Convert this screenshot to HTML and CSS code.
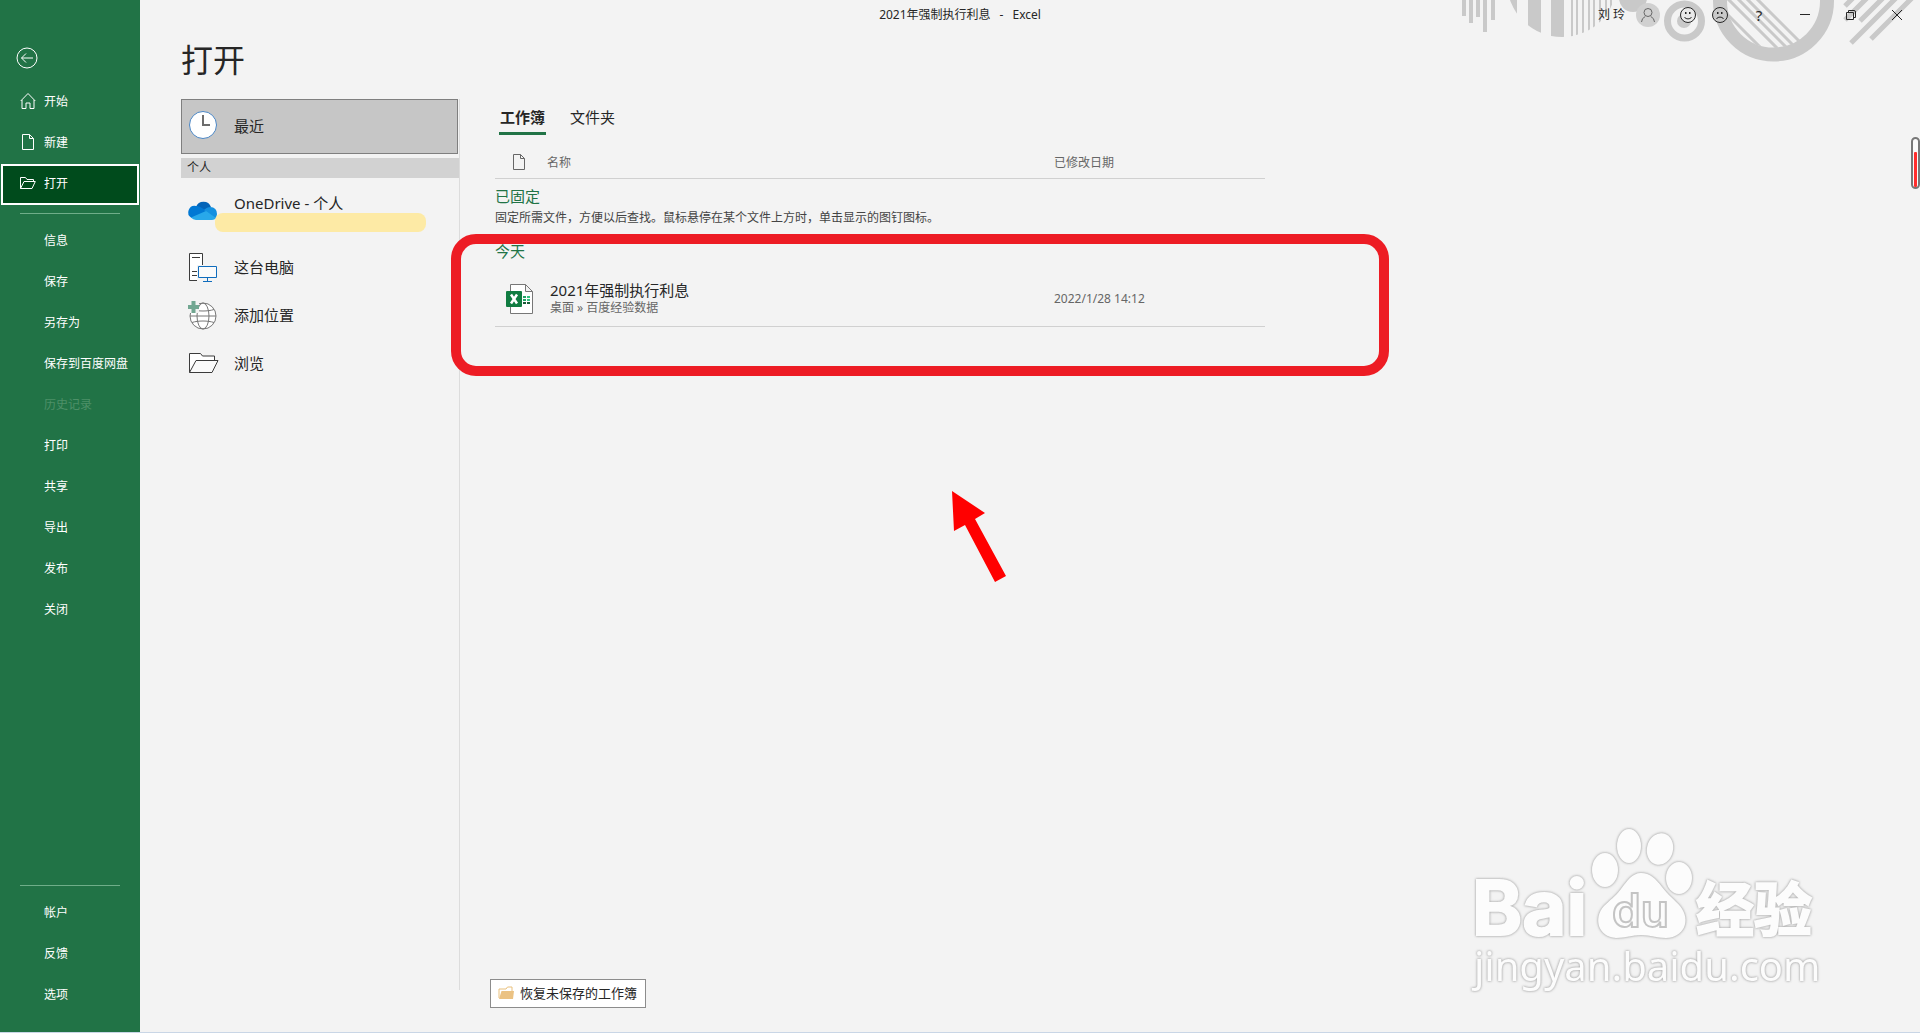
FILE: index.html
```html
<!DOCTYPE html>
<html lang="zh-CN">
<head>
    <meta charset="UTF-8">
    <title>2021年强制执行利息 - Excel</title>
    <link rel="stylesheet" href="styles.css">
</head>
<body>
<div class="app">

    <header class="titlebar">
        <svg class="titlebar-art" width="480" height="70" viewBox="0 0 480 70" aria-hidden="true">
            <defs>
                <clipPath id="discClip"><circle cx="122" cy="-18" r="55"/></clipPath>
                <clipPath id="ringClip"><circle cx="333.500" cy="1" r="47"/></clipPath>
            </defs>
            <g fill="#c9c9c9">
                <path d="M22 0h4v16h-4zM29 0h4v23h-4zM36 0h4v17h-4zM43 0h4v32h-4zM51 0h4v20h-4z"/>
                <path clip-path="url(#discClip)" d="M64 0h13v40H64zM88 0h13v40H88zM111 0h13v40h-13zM131 0h2v40h-2zM136 0h2v40h-2zM142 0h2v40h-2zM148 0h2v40h-2zM153 0h2v40h-2zM159 0h2v40h-2zM165 0h2v40h-2zM170 0h2v40h-2z"/>
                <circle cx="193" cy="-2" r="14"/>
                <circle cx="244" cy="21" r="7"/>
            </g>
            <g fill="none" stroke="#c9c9c9">
                <circle cx="244.500" cy="21" r="17" stroke-width="7"/>
                <circle cx="333.500" cy="1" r="53.500" stroke-width="14"/>
                <g clip-path="url(#ringClip)" stroke-width="3">
                    <path d="M269-4l62 62M285-4l57 57M295-4l54 54M304-4l51 51M314-4l46 46"/>
                </g>
                <path stroke-width="5" d="M405 6l9-9M405 20l28-28M420 21l28-28M411 43l48-48M431 39l45-45"/>
            </g>
        </svg>
        <div class="doc-title"><span>2021年强制执行利息</span><span>-</span><span>Excel</span></div>
        <div class="titlebar-actions">
            <span class="user-name">刘 玲</span>
            <button class="avatar" aria-label="帐户">
                <svg width="16" height="16" viewBox="0 0 16 16"><circle cx="8" cy="5.500" r="4"/><path d="M1.500 15a6.500 6.500 0 0 1 3.700-5.500M14.500 15a6.500 6.500 0 0 0-3.700-5.500"/></svg>
            </button>
            <button class="face" aria-label="发送笑脸">
                <svg width="18" height="18" viewBox="0 0 18 18"><circle cx="9" cy="9" r="7.500"/><path d="M5.500 11c1 2.500 6 2.500 7 0"/><path class="eyes" d="M6 6h1.500v2H6zM10 6h1.500v2H10z"/></svg>
            </button>
            <button class="face" aria-label="发送哭脸">
                <svg width="18" height="18" viewBox="0 0 18 18"><circle cx="9" cy="9" r="7.500"/><path d="M5.500 13c1-2.500 6-2.500 7 0"/><path class="eyes" d="M6 6h1.500v2H6zM10 6h1.500v2H10z"/></svg>
            </button>
            <button class="win-btn help" aria-label="帮助">?</button>
            <button class="win-btn" aria-label="最小化">
                <svg width="12" height="12" viewBox="0 0 12 12"><path d="M1 5.500h10"/></svg>
            </button>
            <button class="win-btn" aria-label="还原">
                <svg width="12" height="12" viewBox="0 0 12 12"><path d="M1.500 3.500h7v7h-7zM3.500 3V1.500H9A1.500 1.500 0 0 1 10.500 3v5.500H9"/></svg>
            </button>
            <button class="win-btn" aria-label="关闭">
                <svg width="12" height="12" viewBox="0 0 12 12"><path d="M1 1l10 10M11 1L1 11"/></svg>
            </button>
        </div>
    </header>

    <nav class="sidebar">
        <button class="back" aria-label="返回">
            <svg width="22" height="22" viewBox="0 0 22 22"><circle cx="11" cy="11" r="10"/><path d="M17 11H5.500M10 6.500L5.500 11l4.500 4.500"/></svg>
        </button>
        <button class="nav-item">
            <svg width="16" height="18" viewBox="0 0 16 18"><path d="M.7 9L8 1.500 15.300 9M2 8v8.500h4V11h4v5.500h4V8"/></svg>
            开始
        </button>
        <button class="nav-item">
            <svg width="16" height="18" viewBox="0 0 16 18"><path d="M2.500 1.500h7l4 4v11h-11zM9.500 1.500v4h4"/></svg>
            新建
        </button>
        <button class="nav-item active">
            <svg width="16" height="18" viewBox="0 0 16 18"><path d="M.5 14.500v-11h5l1.500 2h6.500v2M.5 14.500L4 7.500h11.300l-3.300 7z"/></svg>
            打开
        </button>
        <hr>
        <button class="nav-item text-only">信息</button>
        <button class="nav-item text-only">保存</button>
        <button class="nav-item text-only">另存为</button>
        <button class="nav-item text-only">保存到百度网盘</button>
        <button class="nav-item text-only" disabled>历史记录</button>
        <button class="nav-item text-only">打印</button>
        <button class="nav-item text-only">共享</button>
        <button class="nav-item text-only">导出</button>
        <button class="nav-item text-only">发布</button>
        <button class="nav-item text-only">关闭</button>
        <div class="nav-bottom">
            <hr>
            <button class="nav-item text-only">帐户</button>
            <button class="nav-item text-only">反馈</button>
            <button class="nav-item text-only">选项</button>
        </div>
    </nav>

    <main class="main">
        <h1>打开</h1>
        <div class="columns">

            <section class="places">
                <button class="place recent">
                    <svg width="28" height="28" viewBox="0 0 28 28"><circle cx="14" cy="14" r="13.500" fill="#fff" stroke="#4a86c5"/><path d="M14 4v10h7" fill="none" stroke="#6d6d6d" stroke-width="2"/></svg>
                    最近
                </button>
                <h2 class="place-group">个人</h2>
                <button class="place onedrive">
                    <svg width="28" height="20" viewBox="0 0 28 20">
                        <path fill="#0364b8" d="M7 6a8 8 0 0 1 15 0l-5 5z"/>
                        <path fill="#0078d4" d="M7 5c2 0 3.500.5 5 1.500L20 11 2.500 17A6.500 6.500 0 0 1 7 5z"/>
                        <path fill="#1490df" d="M21.500 6A6.500 6.500 0 0 1 28 13c0 2-1 4-2 5L15 9c2-2 4-3 6.500-3z"/>
                        <path fill="#28a8ea" d="M2 16.500L17 10l10 7a5 5 0 0 1-4 2H7a7 7 0 0 1-5-2.500z"/>
                    </svg>
                    <span class="place-name">OneDrive - 个人</span>
                    <span class="mask"></span>
                </button>
                <button class="place">
                    <svg width="28" height="30" viewBox="0 0 28 30"><path d="M.5 1.500h13v27H.5z" fill="#fff" stroke="#3b3b3b"/><path d="M3 5.500h8M3 19.500h5M3 23.500h5" stroke="#3b3b3b"/><path d="M8 13h20v17H8z" fill="#f3f3f3"/><path d="M9.500 14.500h18v11h-18zM18.500 25.500v4M14 29.500h9" fill="#fafafa" stroke="#0f6cbd"/></svg>
                    这台电脑
                </button>
                <button class="place">
                    <svg width="28" height="30" viewBox="0 0 28 30"><circle cx="14" cy="16" r="13" fill="#fff"/><g fill="none" stroke="#777"><circle cx="14" cy="16" r="13"/><ellipse cx="14" cy="16" rx="6" ry="13"/><path d="M1 16h26M3 9.500c6 2 16 2 22 0M3 22.500c6-2 16-2 22 0"/></g><path d="M-1 0h11v13H-1z" fill="#f3f3f3"/><path d="M2.500 1h4v4H10v4H6.500v4h-4V9H-1V5h3.500z" fill="#72a792"/></svg>
                    添加位置
                </button>
                <button class="place">
                    <svg width="28" height="22" viewBox="0 0 28 22"><path d="M.5 20.500v-19h11l2 2.500h12v5" fill="#fff" stroke="#3b3b3b"/><path d="M.5 20.500L7 8.500h22l-6 12z" fill="#fafafa" stroke="#3b3b3b"/></svg>
                    浏览
                </button>
            </section>

            <section class="files">
                <div class="tabs">
                    <button class="tab selected">工作簿</button>
                    <button class="tab">文件夹</button>
                </div>
                <table class="file-table">
                    <thead>
                        <tr>
                            <th class="col-icon"><svg width="27" height="18" viewBox="0 0 27 18"><path d="M7.500 1.500h7l4 4v11h-11zM14.500 1.500v4h4" fill="none" stroke="#666"/></svg></th>
                            <th>名称</th>
                            <th class="col-date">已修改日期</th>
                        </tr>
                    </thead>
                    <tbody>
                        <tr>
                            <td class="pinned" colspan="3">
                                <h3>已固定</h3>
                                <p>固定所需文件，方便以后查找。鼠标悬停在某个文件上方时，单击显示的图钉图标。</p>
                            </td>
                        </tr>
                        <tr>
                            <td class="today" colspan="3"><h3>今天</h3></td>
                        </tr>
                        <tr class="file">
                            <td class="col-icon">
                                <svg width="27" height="32" viewBox="0 0 27 32">
                                    <path d="M4.500 1.500h15l7 7v22h-22zM19.500 1.500v7h7" fill="#fff" stroke="#777"/>
                                    <path d="M17 13h3v2h-3zM17 16h3v2h-3z" fill="#21a366"/><path d="M21 13h3v2h-3zM21 16h3v2h-3z" fill="#33c481"/><path d="M17 19h3v2h-3zM21 19h3v2h-3z" fill="#185c37"/>
                                    <rect y="8" width="16" height="16" rx="1" fill="#107c41"/>
                                    <path d="M5 11.500l6 9M11 11.500l-6 9" stroke="#fff" stroke-width="2.500"/>
                                </svg>
                            </td>
                            <td class="file-name">
                                <a href="#">2021年强制执行利息</a>
                                <small>桌面 » 百度经验数据</small>
                            </td>
                            <td class="col-date">2022/1/28 14:12</td>
                        </tr>
                    </tbody>
                </table>
                <button class="recover">
                    <svg width="16" height="14" viewBox="0 0 16 14"><path d="M1 12V3h7l1.500-2H14v4" fill="#fff" stroke="#e9c07d"/><path d="M1 13L3.500 5H16l-1 8z" fill="#ebc283"/></svg>
                    恢复未保存的工作簿
                </button>
            </section>
        </div>
    </main>

    <!-- marks laid over the window -->
    <div class="highlight"></div>
    <svg class="arrow" width="56" height="94" viewBox="0 0 56 94"><path fill="#f00" d="M0 1l33 22-10 6 31 57-11 6-30-57-11 6z"/></svg>
    <svg class="meter" width="9" height="52" viewBox="0 0 9 52"><rect x="1" y="1" width="7" height="50" rx="3.500" fill="#fafafa" stroke="#777" stroke-width="2"/><rect x="3" y="15" width="3" height="35" rx="1" fill="#ff2d2d"/></svg>

    <svg class="watermark" width="360" height="175" viewBox="0 0 360 175">
        <g class="wm-shape">
            <ellipse cx="135" cy="45" rx="13" ry="17"/>
            <ellipse cx="159" cy="21" rx="12" ry="17"/>
            <ellipse cx="190" cy="24" rx="13" ry="16" transform="rotate(14 190 24)"/>
            <ellipse cx="209" cy="53" rx="13" ry="16"/>
            <path d="M171 48c9 0 15 6 21 14s13 13 18 19c12 15 3 32-14 32-10 0-15-3-25-3-9 0-15 3-25 3-18-1-23-20-12-32 6-6 11-9 17-17s11-16 20-16z"/>
        </g>
        <text class="wm-bold" x="2" y="110" font-size="76">Bai</text>
        <text class="wm-du" x="142" y="102" font-size="46">du</text>
        <text class="wm-bold wm-cjk" x="226" y="106" font-size="58">经验</text>
        <text class="wm-url" x="4" y="156" font-size="40">jingyan.baidu.com</text>
    </svg>
</div>
</body>
</html>
```

FILE: styles.css
```css
* {
    box-sizing: border-box;
}

body {
    margin: 0;
    background-color: #f3f3f3;
    font-family: "Noto Sans", "Noto Sans CJK SC", sans-serif;
    font-size: 12px;
    color: #262626;
}

button {
    margin: 0;
    padding: 0;
    border: 0;
    background: none;
    color: inherit;
    font: inherit;
    text-align: left;
}

h1, h2, h3, p {
    margin: 0;
    font-weight: normal;
}

.app {
    position: relative;
    display: grid;
    grid-template-columns: 140px 1fr;
    grid-template-rows: 30px 1fr;
    min-height: 100vh;
    border-bottom: 1px solid #c9d6e6;
    overflow: hidden;
}

/* title bar */
.titlebar {
    grid-row: 1;
    grid-column: 1 / 3;
    z-index: 1;
    position: relative;
    display: grid;
    grid-template-columns: 1fr auto 1fr;
    align-items: center;
    line-height: 24px;
    pointer-events: none;
}

.titlebar-art {
    position: absolute;
    top: 0;
    right: 0;
}

.doc-title {
    grid-column: 2;
    display: flex;
    gap: 9px;
}

.titlebar-actions {
    position: relative;
    display: flex;
    align-items: center;
    justify-content: flex-end;
    pointer-events: auto;
}

.user-name {
    margin-right: 11px;
}

.titlebar-actions button {
    display: flex;
    align-items: center;
    justify-content: center;
}

.titlebar-actions svg {
    fill: none;
    stroke: #262626;
}

.titlebar-actions .avatar {
    width: 24px;
    height: 24px;
    margin-right: 12px;
    border-radius: 50%;
    background-color: #d0d0d0;
}

.titlebar-actions .avatar svg {
    stroke: #666;
}

.face {
    width: 32px;
}

.face circle {
    fill: #e9e9e9;
}

.face + .face circle {
    fill: #c9c9c9;
}

.face .eyes {
    fill: #262626;
    stroke: none;
}

.win-btn {
    width: 46px;
    height: 30px;
}

.help {
    font-size: 15px;
}

/* green sidebar */
.sidebar {
    grid-row: 1 / 3;
    grid-column: 1;
    display: flex;
    flex-direction: column;
    padding: 47px 0 16px;
    background-color: #217346;
    color: #fff;
}

.sidebar svg {
    fill: none;
    stroke: #fff;
}

.back {
    height: 35px;
    padding-left: 16px;
}

.back svg {
    display: block;
    margin-bottom: 13px;
}

.nav-item {
    display: flex;
    align-items: center;
    gap: 8px;
    width: 100%;
    height: 41px;
    padding: 0 0 3px 20px;
    white-space: nowrap;
}

.nav-item.text-only {
    padding-left: 44px;
}

.nav-item.active {
    width: auto;
    margin: 0 1px;
    padding-left: 17px;
    border: 2px solid #fff;
    background-color: #004b1c;
}

.nav-item:disabled {
    color: #4d9068;
}

.sidebar hr {
    width: 100px;
    height: 1px;
    margin: 8px 20px 7px;
    border: 0;
    background-color: #6fae89;
}

.nav-bottom {
    margin-top: auto;
}

/* page */
.main {
    grid-row: 2;
    grid-column: 2;
    display: flex;
    flex-direction: column;
    padding: 8px 0 0 41px;
}

h1 {
    margin-bottom: 17px;
    font-size: 32px;
    line-height: 44px;
}

.columns {
    flex: 1;
    display: flex;
}

.places {
    width: 279px;
    margin-bottom: 42px;
    border-right: 1px solid #dcdcdc;
    font-size: 15px;
}

.place {
    position: relative;
    display: flex;
    align-items: center;
    gap: 17px;
    width: 277px;
    height: 48px;
    padding: 0 0 3px 7px;
    border: 1px solid transparent;
}

.place svg {
    overflow: visible;
}

.place.recent {
    height: 55px;
    border-color: #7f7f7f;
    background-color: #c6c6c6;
}

.place-group {
    height: 20px;
    margin-top: 4px;
    padding-left: 6px;
    background-color: #d2d2d2;
    font-size: 12px;
    line-height: 20px;
}

.place.onedrive {
    height: 66px;
    padding-bottom: 0;
}

.place-name {
    height: 36px;
    line-height: 20px;
}

.mask {
    position: absolute;
    top: 34px;
    left: 33px;
    width: 211px;
    height: 19px;
    border-radius: 8px;
    background-color: #fdeaa5;
}

.files {
    flex: 1;
    display: flex;
    flex-direction: column;
    align-items: flex-start;
    margin-left: 30px;
    padding-bottom: 24px;
}

.tabs {
    display: flex;
    gap: 23px;
    padding-left: 9px;
}

.tab {
    padding: 6px 1px 3px;
    border-bottom: 3px solid transparent;
    font-size: 15px;
    line-height: 24px;
}

.tab.selected {
    border-color: #217346;
    font-weight: bold;
}

.file-table {
    width: 100%;
    max-width: 770px;
    margin: 11px 0 0 5px;
    border-spacing: 0;
    table-layout: fixed;
}

th, td {
    padding: 0;
    text-align: left;
    font-weight: normal;
}

th {
    height: 33px;
    border-bottom: 1px solid #d0d0d0;
    color: #666;
}

.col-icon {
    width: 52px;
    padding-left: 11px;
}

.col-date {
    width: 211px;
    color: #666;
}

.file-table svg {
    display: block;
}

h3 {
    color: #217346;
    font-size: 15px;
    line-height: 20px;
}

.pinned {
    padding-top: 7px;
}

.pinned p {
    color: #444;
    line-height: 24px;
}

.today {
    padding: 11px 0 10px;
}

.file td {
    border-bottom: 1px solid #d0d0d0;
}

.file-name {
    padding: 9px 0 10px 3px;
}

.file-name a {
    display: block;
    color: #262626;
    font-size: 15px;
    line-height: 20px;
    text-decoration: none;
}

.file-name small {
    display: block;
    color: #666;
    font-size: 12px;
    line-height: 16px;
}

.recover {
    display: flex;
    align-items: center;
    gap: 6px;
    height: 29px;
    margin-top: auto;
    padding: 0 8px 2px 7px;
    border: 1px solid #8c8c8c;
    background-color: #fff;
    font-size: 13px;
}

/* overlays */
.highlight {
    position: absolute;
    top: 234px;
    left: 451px;
    width: 938px;
    height: 142px;
    border: 10px solid #ed1c24;
    border-radius: 25px;
    pointer-events: none;
}

.arrow {
    position: absolute;
    top: 490px;
    left: 952px;
}

.meter {
    position: absolute;
    top: 137px;
    right: 0;
}

.watermark {
    position: absolute;
    right: 90px;
    bottom: 32px;
    overflow: visible;
    fill: #fcfcfc;
    filter: drop-shadow(0 0 1px #aaa) drop-shadow(0 0 1px #ccc);
}

.wm-bold {
    font-family: Inter, sans-serif;
    font-weight: bold;
    stroke: #fcfcfc;
    stroke-width: 2px;
}

.wm-cjk {
    font-family: "Noto Sans CJK SC", sans-serif;
}

.wm-du {
    font-family: Inter, sans-serif;
    font-weight: 600;
    stroke: #c4c4c4;
    stroke-width: 2px;
}

.wm-url {
    font-family: "Noto Sans", sans-serif;
}
```
